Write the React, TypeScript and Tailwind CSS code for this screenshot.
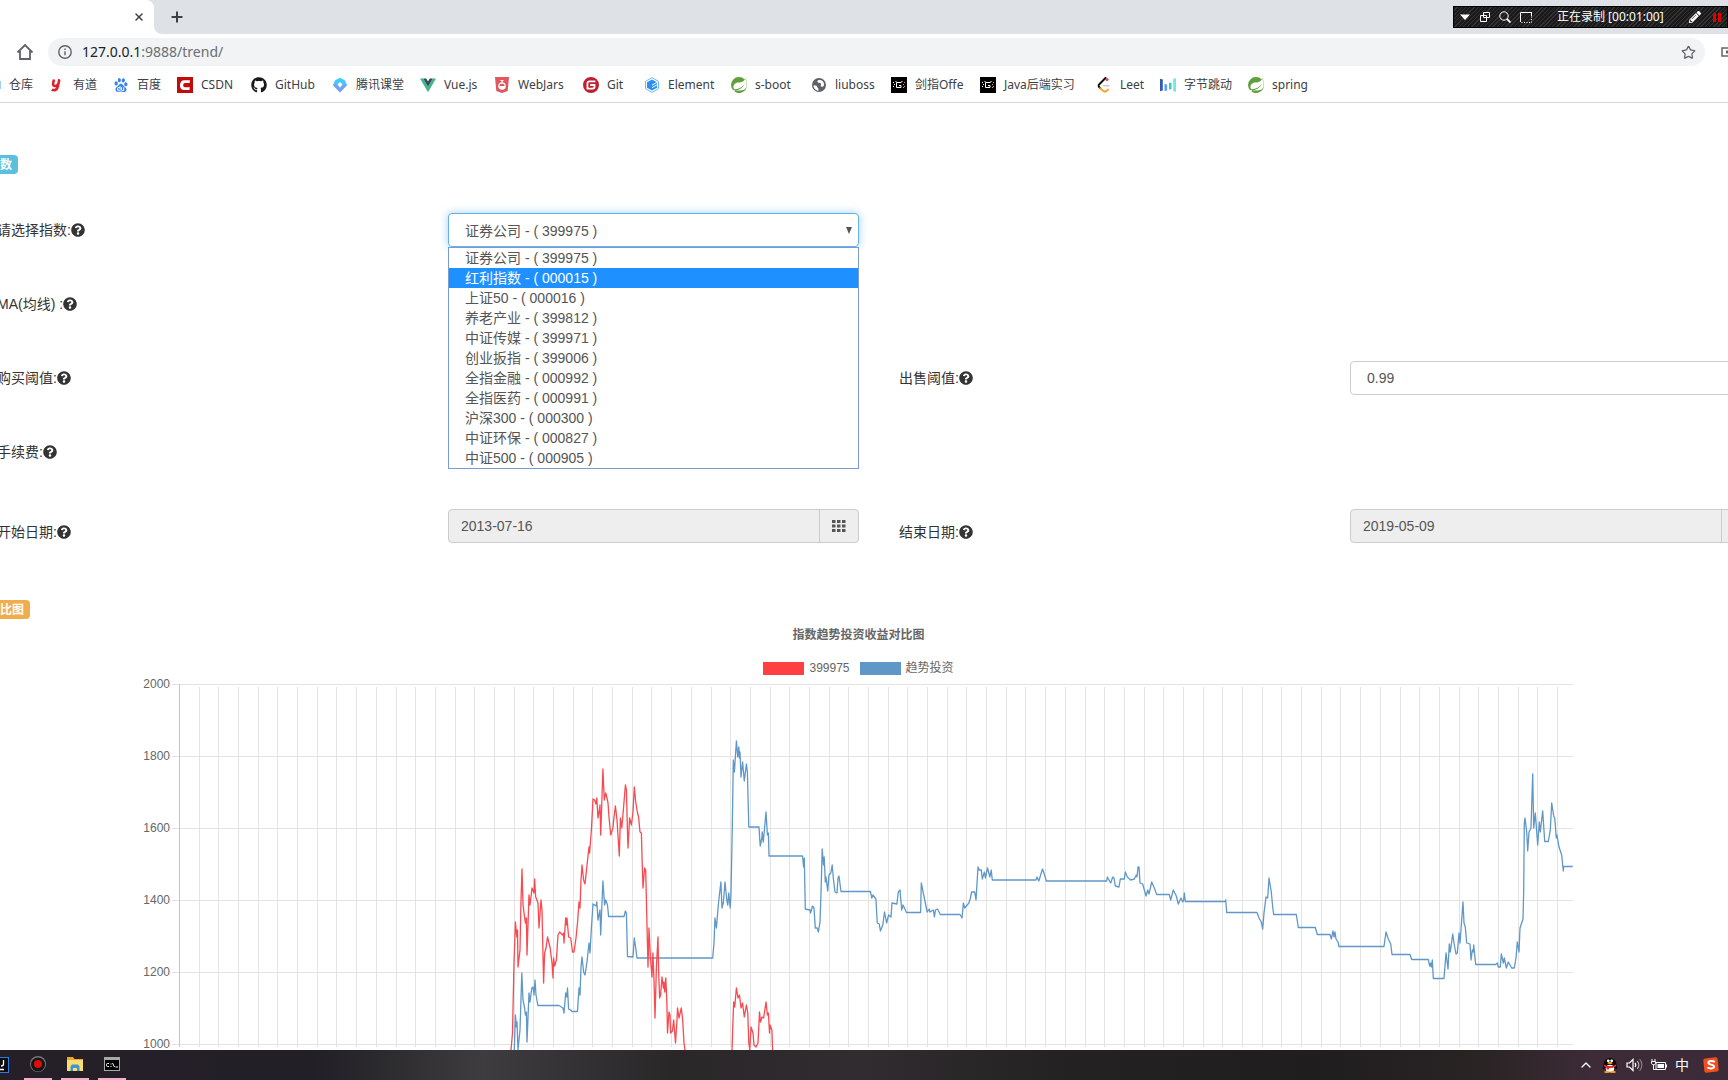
import type { ReactNode } from "react";
import { ChevronUp, Plus, Star, X } from "lucide-react";
import { FaGithub, FaPencilAlt, FaQuestionCircle } from "react-icons/fa";
import { SiBaidu, SiGitee, SiSpring } from "react-icons/si";

const indexes = [
  { name: "证券公司", code: "399975" },
  { name: "红利指数", code: "000015" },
  { name: "上证50", code: "000016" },
  { name: "养老产业", code: "399812" },
  { name: "中证传媒", code: "399971" },
  { name: "创业扳指", code: "399006" },
  { name: "全指金融", code: "000992" },
  { name: "全指医药", code: "000991" },
  { name: "沪深300", code: "000300" },
  { name: "中证环保", code: "000827" },
  { name: "中证500", code: "000905" },
];

const CsdnIcon = () => (
  <svg viewBox="0 0 16 16" className="h-4 w-4">
    <rect width="16" height="16" fill="#c20c0c" />
    <path d="M13 3.2H7.4C4.6 3.2 3.2 5.2 3 8c-.2 3 1 4.900 3.800 4.900h5.600l.4-2.700H7.900c-1.300 0-1.800-.8-1.700-2.200.1-1.300.7-2.100 2-2.100h4.400z" fill="#fff" />
  </svg>
);

const ClassroomIcon = () => (
  <svg viewBox="0 0 16 16" className="h-4 w-4">
    <path d="M8 1l5 2.500L15 8l-7 7.500L1 8l2-4.500z" fill="#4fc3fb" />
    <path d="M1 8l7 7.500L15 8l-3-1-4 4.500L4 7z" fill="#7d9df2" />
    <path d="M8 5l2.500 2.500L8 10.500 5.500 7.500z" fill="#fff" />
    <path d="M8 1l5 2.500L8 5 3 3.500z" fill="#35d0fb" />
  </svg>
);

const VueIcon = () => (
  <svg viewBox="0 0 16 16" className="h-4 w-4">
    <path d="M0 1.500h3.200L8 9.700l4.800-8.200H16L8 15.200z" fill="#41b883" />
    <path d="M3.200 1.500h3L8 4.600l1.800-3.100h3L8 9.700z" fill="#35495e" />
  </svg>
);

const WebJarsIcon = () => (
  <svg viewBox="0 0 16 16" className="h-4 w-4">
    <path d="M1 0h14l-1.300 14L8 16l-5.700-2z" fill="#e0585f" />
    <path d="M6.500 3.500h3M8 3.500v3" stroke="#fff" strokeWidth="1.200" />
    <circle cx="8" cy="9" r="3.200" fill="none" stroke="#fff" strokeWidth="1.200" />
    <path d="M4.800 9h6.400a3.200 3.200 0 0 1-6.400 0z" fill="#fff" />
  </svg>
);

const ElementIcon = () => (
  <svg viewBox="0 0 16 16" className="h-4 w-4">
    <path d="M8 .6l6.500 3.700v7.400L8 15.400l-6.500-3.700V4.300z" fill="none" stroke="#6cb8ff" strokeWidth="1" />
    <path d="M8 2.400l5 2.900v5.400l-5 2.900-5-2.900V5.300z" fill="#2a8ff7" />
    <path d="M8 8.200l5-2.900M8 10.700l5-2.900" stroke="#fff" strokeWidth="1" />
  </svg>
);

const GlobeIcon = () => (
  <svg viewBox="0 0 16 16" className="h-4 w-4">
    <circle cx="8" cy="8" r="7" fill="#5f6368" />
    <path d="M2.500 8.500c1.600-.6 3.500.2 3.700 1.600.2 1 1.300 1 1.300 2.200v1.400C5 13.500 2.600 11.500 2.500 8.500zM8 3c-1.600.2-2.200 1.600-1 2.500 1 .8 2.600.2 3 1.300.5 1.300-1 1.500 0 2.600.8.900 2.200.3 3-.9.4-2.700-1.300-5.500-4-5.500z" fill="#fff" />
  </svg>
);

const PixelIcon = () => (
  <svg viewBox="0 0 16 16" className="h-4 w-4">
    <rect width="16" height="16" fill="#000" />
    <path d="M5.500 5.500h5M5.500 5.500v5h4.500v-2H8M5 4v1M11 4v1" fill="none" stroke="#fff" />
    <path d="M2 5h1v1H2zM3 7h1v1H3zM2 9h1v1H2z" fill="#fff" />
    <path d="M13 5h1v1h-1zM12 7h1v1h-1zM13 9h1v1h-1zM12 10h1v1h-1z" fill="#f28b8b" />
  </svg>
);

const LeetIcon = () => (
  <svg viewBox="0 0 16 16" className="h-4 w-4" fill="none" strokeLinecap="round">
    <path d="M9.500 1L3.300 7.200a2 2 0 0 0 0 3l1 1" stroke="#111" strokeWidth="2" />
    <path d="M4.300 11.200l2.200 2.200c1.400 1.400 3.300 1.400 4.700 0l.8-.8" stroke="#f5a623" strokeWidth="2" />
    <path d="M7.500 8.700H13" stroke="#c9c9c9" strokeWidth="1.600" />
    <circle cx="11" cy="2.500" r="1.600" fill="#e0455e" />
  </svg>
);

const BytesIcon = () => (
  <svg viewBox="0 0 16 16" className="h-4 w-4">
    <path d="M0 1.800l2.800.7v11L0 14.200z" fill="#325ab4" />
    <path d="M4.500 7l2.600.6v5.800l-2.600.6z" fill="#5b9cf6" />
    <path d="M9 5.500l2.600.6v6l-2.600.6z" fill="#3fc9c9" />
    <path d="M13.200 1.800l2.800-.6v13.600l-2.800-.6z" fill="#78e6dc" />
  </svg>
);

const YoudaoIcon = () => (
  <svg viewBox="0 0 16 16" className="h-4 w-4" fill="none" stroke="#d9232e" strokeWidth="2.600">
    <path d="M5 2.500L4.200 6c-.5 2.300.6 3 2 3s2.700-.8 3.300-3l.8-3.500M10.300 2.500L8.800 9.500c-.6 2.600-1.800 3.700-3.600 3.700-1 0-1.700-.2-2.400-.6" />
  </svg>
);

const bookmarks: { label: string; width: string; icon: ReactNode }[] = [
  { label: "有道", width: "w-16", icon: <YoudaoIcon /> },
  { label: "百度", width: "w-16", icon: <SiBaidu className="h-[14px] w-[14px] text-[#3c82e8]" /> },
  { label: "CSDN", width: "w-[74px]", icon: <CsdnIcon /> },
  { label: "GitHub", width: "w-[81px]", icon: <FaGithub className="h-4 w-4 text-[#191717]" /> },
  { label: "腾讯课堂", width: "w-[88px]", icon: <ClassroomIcon /> },
  { label: "Vue.js", width: "w-[74px]", icon: <VueIcon /> },
  { label: "WebJars", width: "w-[89px]", icon: <WebJarsIcon /> },
  { label: "Git", width: "w-[61px]", icon: <SiGitee className="h-4 w-4 text-[#c01f2f]" /> },
  { label: "Element", width: "w-[87px]", icon: <ElementIcon /> },
  { label: "s-boot", width: "w-20", icon: <SiSpring className="h-4 w-4 text-[#5fa03c]" /> },
  { label: "liuboss", width: "w-20", icon: <GlobeIcon /> },
  { label: "剑指Offe", width: "w-[89px]", icon: <PixelIcon /> },
  { label: "Java后端实习", width: "w-[116px]", icon: <PixelIcon /> },
  { label: "Leet", width: "w-16", icon: <LeetIcon /> },
  { label: "字节跳动", width: "w-[88px]", icon: <BytesIcon /> },
  { label: "spring", width: "w-16", icon: <SiSpring className="h-4 w-4 text-[#5fa03c]" /> },
];

const RecorderBar = () => (
  <div className="mt-[6px] ml-auto flex h-[22px] w-[275px] items-center border border-black bg-[repeating-linear-gradient(135deg,#1a1a1a_0_2px,#333_2px_3px)] text-white">
    <button aria-label="菜单" className="ml-[5px] w-[20px]">
      <svg viewBox="0 0 12 12" className="h-3 w-3"><path d="M1 3.500h10L6 9z" fill="#fff" /></svg>
    </button>
    <button aria-label="窗口" className="w-[20px]">
      <svg viewBox="0 0 12 12" className="h-3 w-3" fill="none" stroke="#fff"><path d="M4.500 1.500h6v5h-6zM1.500 4.500h6v6h-6z" /></svg>
    </button>
    <button aria-label="放大" className="w-[21px]">
      <svg viewBox="0 0 12 12" className="h-3 w-3" fill="none" stroke="#fff"><circle cx="5" cy="5" r="4.200" /><path d="M8 8l3.500 3.500" strokeWidth="1.800" /></svg>
    </button>
    <button aria-label="区域" className="w-[37px]">
      <svg viewBox="0 0 12 12" className="h-3 w-3" fill="none" stroke="#fff"><path d="M.5 11V1.500H12" /><path d="M11.500 3v8.500H1" strokeDasharray="1 1.500" /><path d="M8 1.500h3.500V5" /></svg>
    </button>
    <span className="w-[132px] text-xs whitespace-nowrap">正在录制 [00:01:00]</span>
    <FaPencilAlt className="h-3 w-3" />
    <span className="ml-[12px] flex gap-[2px]">
      <i className="h-[9px] w-[3px] bg-[#e00000]" />
      <i className="h-[9px] w-[3px] bg-[#e00000]" />
    </span>
  </div>
);

const Browser = () => (
  <header className="shrink-0 border-b border-[#d5d6d8] bg-white font-['Noto_Sans','Noto_Sans_CJK_SC',sans-serif]">
    <div className="flex h-[34px] bg-[#dee1e6]">
      <div className="flex w-[154px] shrink-0 items-center justify-end rounded-tr-lg bg-white pr-[9px]">
        <button aria-label="关闭标签页"><X size={12} strokeWidth={3} className="text-[#3c4043]" /></button>
      </div>
      <svg viewBox="0 0 8 8" className="h-2 w-2 shrink-0 self-end"><path d="M0 0v8h8a8 8 0 0 1-8-8z" fill="#fff" /></svg>
      <button aria-label="新标签页" className="ml-[7px]"><Plus size={16} strokeWidth={3} className="text-[#3c4043]" /></button>
      <RecorderBar />
    </div>
    <div className="flex h-9 items-center">
      <button aria-label="主页" className="ml-4 w-[32px]">
        <svg viewBox="0 0 18 18" className="h-[18px] w-[18px]" fill="none" stroke="#5f6368" strokeWidth="1.800">
          <path d="M1.500 9.500L9 2l7.500 7.500M4 8v8h10V8" />
        </svg>
      </button>
      <div className="flex h-7 flex-1 items-center rounded-full bg-[#f1f3f4] pr-[9px] pl-[10px]">
        <svg viewBox="0 0 14 14" className="h-[14px] w-[14px]" fill="none" stroke="#5f6368" strokeWidth="1.400">
          <circle cx="7" cy="7" r="6.200" /><path d="M7 6.200v4M7 3.500v1.400" />
        </svg>
        <a href="#trend" className="ml-[10px] flex-1 text-sm leading-5 text-[#6b6f73]"><span className="text-[#202124]">127.0.0.1</span>:9888/trend/</a>
        <button aria-label="收藏"><Star size={15} className="text-[#5f6368]" /></button>
      </div>
      <svg viewBox="0 0 7 10" className="ml-[16px] h-[10px] w-[7px]"><path d="M7 1H1v8h6" fill="none" stroke="#5f6368" strokeWidth="1.500" /><path d="M5 3.500h2v3H5z" fill="#5f6368" /></svg>
    </div>
    <nav className="flex h-8 items-center pb-[3px] text-xs text-[#3c4043]">
      <a href="#repo" className="flex w-[49px] items-center whitespace-nowrap">
        <i className="mr-2 h-2 w-px bg-[#9fd0f5]" />仓库
      </a>
      {bookmarks.map((item, i) => (
        <a key={i} href="#bookmark" className={`flex shrink-0 items-center gap-2 whitespace-nowrap ${item.width}`}>
          <span className="flex h-4 w-4 shrink-0 items-center justify-center">{item.icon}</span>
          {item.label}
        </a>
      ))}
    </nav>
  </header>
);

const FieldLabel = ({ htmlFor, className = "", children }: { htmlFor: string; className?: string; children: ReactNode }) => (
  <label htmlFor={htmlFor} className={`flex items-center whitespace-nowrap text-[#333] ${className}`}>
    {children}
    <FaQuestionCircle size={14} />
  </label>
);

const DateField = ({ id, value }: { id: string; value: string }) => (
  <div className="flex rounded border border-[#ccc] bg-[#eee]">
    <input id={id} readOnly defaultValue={value} className="w-0 flex-1 px-3 text-[#555] outline-none" />
    <button type="button" aria-label="选择日期" className="flex w-[39px] items-center justify-center border-l border-[#ccc]">
      <svg viewBox="0 0 14 14" className="h-[14px] w-[14px]" fill="#555">
        <path d="M0 1h3.500v3H0zM5 1h3.500v3H5zM10 1h3.500v3H10zM0 5.500h3.500v3H0zM5 5.500h3.500v3H5zM10 5.500h3.500v3H10zM0 10h3.500v3H0zM5 10h3.500v3H5zM10 10h3.500v3H10z" />
      </svg>
    </button>
  </div>
);

const textBox = "w-full rounded border border-[#ccc] bg-white px-4 text-[#555] outline-none";

const TrendForm = () => (
  <form className="mt-[39px] -mr-[33px] -ml-[3px] grid auto-rows-[34px] grid-cols-4 gap-10 text-sm">
    <FieldLabel htmlFor="index">请选择指数:</FieldLabel>
    <div className="relative">
      <select
        id="index"
        className="h-full w-full appearance-none rounded border border-[#66afe9] bg-white pt-px pl-4 text-[#555] shadow-[0_0_8px_rgba(102,175,233,0.6)] outline-none"
      >
        {indexes.map((item) => (
          <option key={item.code}>{`${item.name} - ( ${item.code} )`}</option>
        ))}
      </select>
      <svg viewBox="0 0 6 7" className="pointer-events-none absolute top-[14px] right-[7px] h-[7px] w-[6px]"><path d="M0 0h6L3 7z" fill="#555" /></svg>
      <ul role="listbox" className="absolute top-full left-0 z-10 w-full border border-[#7a9cd3] bg-white leading-5 text-[#555]">
        {indexes.map((item, i) => (
          <li key={item.code} role="option" aria-selected={i === 1} className={i === 1 ? "bg-[#1e90ff] pl-4 text-white" : "pl-4"}>
            {item.name} - ( {item.code} )
          </li>
        ))}
      </ul>
    </div>

    <FieldLabel htmlFor="ma" className="col-start-1">MA(均线) :</FieldLabel>
    <input id="ma" className={textBox} />

    <FieldLabel htmlFor="buy" className="col-start-1">购买阈值:</FieldLabel>
    <input id="buy" className={textBox} />
    <FieldLabel htmlFor="sell">出售阈值:</FieldLabel>
    <input id="sell" defaultValue="0.99" className={textBox} />

    <FieldLabel htmlFor="fee" className="col-start-1">手续费:</FieldLabel>
    <input id="fee" className={textBox} />

    <FieldLabel htmlFor="start" className="col-start-1 pt-3">开始日期:</FieldLabel>
    <DateField id="start" value="2013-07-16" />
    <FieldLabel htmlFor="end" className="pt-3">结束日期:</FieldLabel>
    <DateField id="end" value="2019-05-09" />
  </form>
);

const indexLine =
  "511,380 512.5,363 514,293 515.4,252 516.8,267 517.5,260 518,297 520,280 521,230 522,199 523,235 524.6,247 525.4,253 526.4,248 527,285 529,225 530,235 532,218 534,223 534.6,209 535.7,227 538,233 539,258 541,230 542,240 543.6,313 544.6,283 546,278 547.5,267 550,277 552,293 553,308 553.6,288 554.6,296 556.4,290 558,265 559.6,262 562.5,265 563.5,263 564,273 565.7,248 566.4,255 567,248 568.6,267 570.7,268 572.5,282 574,282 576,268 577.5,253 579,232 580,238 581,210 582,195 583.6,210 585,214 586.8,197 589,177 589.6,183 591.4,160 593,129 594.6,130 596,134 596.8,128 598,148 599,142 600,135 600.7,165 601.8,133 602.9,99 604.3,130 605.7,123 607,128 608,133 609,147 610.7,165 612.9,158 614,147 615.4,136 617,150 619.3,186 620.4,148 621.8,158 623.6,137 625.4,115 626.4,120 627.5,163 628,178 629.6,148 631.4,155 633,142 634.3,117 635.7,132 637.5,143 638.6,147 640,162 641.4,163 642,187 643,218 644.6,198 645.7,200 646.8,247 648,297 649,258 650.4,288 652,307 652.9,283 654,310 655,348 656.4,297 658,267 658.6,300 659.6,328 660.6,325 662,307 663.4,318 664,312 664.8,322 665.8,308 666.9,333 667.5,363 669,342 670,345 670.6,363 672.4,361 673.7,350 675.5,373 677,350 677.5,338 679,348 681.3,338 682.7,350 684,373 685,380";

const indexRebound =
  "732,380 733,350 733.7,332 734.7,337 736.4,318 738,328 739.5,325 741,338 742.6,333 744.3,347 746.4,335 747.8,343 748.8,373 749.8,380 751,357 753,363 754,375 756,377 758,373 759.5,342 760.5,352 762,347 763.6,348 766,332 767.4,345 768.4,343 769.5,363 770,355 771.9,360 772.6,380";

const trendLine =
  "514.3,380 515.4,345 516.4,357 517,352 518,380 520,360 521.8,303 523,330 524.6,338 525.4,345 526.4,342 527,372 529,323 530,332 531.8,318 533,317 534,325 535,310 536,325 537.9,335.5 559,335.5 563,338 564,343 565.7,323 566.8,327 567.5,318 568.6,339 570.7,340 572,341.500 577.5,341.500 579,318 580,325 581,297 582,287 583.6,302 585,305 587,292 589,273 590,283 591.4,258 593,234 596,236 596.8,232 598,250 600,240 600.7,265 602.9,211 604.6,235 605.7,230 607.5,235 608.6,246.5 624,246.5 625.4,241 626.4,243 627.5,286.5 633,287 634.3,268 635.7,278 637,288 712.7,288 714,273 715,248 716.4,258 718.5,233 720.9,212 722,238 723.3,233 725,212 726.8,230 727.8,235 728.8,223 730.2,238 731,223 732.3,157 733.3,90 734.4,102 736.4,71 737.8,87 738.8,77 739.5,88 740,82 741,107 742.6,92 744.3,111 746.4,94 747.4,102 748.8,157 759,157 760.2,176 761.9,168 762.2,162 763.3,172 766,142 767.4,165 768.4,163 769,186 802.5,186 803.6,197 804.3,188 805.3,239 810,240 810.5,243 812.5,236 814,238 815.3,258 817.3,258 818.4,262 820,252 821,223 822.2,179 823.5,195 824.2,187 825.3,212 826,207 827.7,221 829,205 830.8,203 832.2,195 833.5,210 835,222 837,223 838,208 839,206 841,221.5 870.4,221.5 871.8,228 873,225 875.9,229 877.3,253 879.3,254 880.4,261 882.8,255 884.5,242 886.6,253 888.6,245 891,247 892,233 896.9,234 898.3,222 900,220 901.7,240 903,235 906.5,242.5 920.6,242.5 921.3,213 923.7,225 927.2,242 929.3,239 930,242 933.4,240 934.4,247 935.5,240 937.5,239 940.3,244.5 960,244.5 962,248 963.4,233 964.7,238 968.9,233 970.2,229 971.6,222 974.7,222 976,230 978,197 979.2,200 981.3,200 982.3,209 984.4,202 985.4,208 987.5,198 989.9,207 991.2,200 992.3,210 1036,210 1037,207 1038.8,211 1042.5,199 1044.6,205 1046.3,211 1106.7,211 1107.3,207 1110.7,213 1112.7,207 1114,208 1115.3,216 1119,217 1120.3,209 1124.3,209 1125.3,202 1127.3,207 1130.7,210 1134.3,209 1136.3,205 1137,207 1138,197 1139,197 1140,213 1142.7,214 1146,226 1147.7,220 1149,224 1151.7,212 1154.3,218 1156.7,224.5 1169.3,224.5 1170.7,230 1173.3,220 1176.3,226 1178.3,234 1181,228 1182.7,232 1183.6,230 1184.3,223 1185.3,231.5 1225.3,231.5 1225.7,230 1226.7,242.5 1257,242.5 1259,248 1261.3,252 1262.7,259 1264,243 1266,227 1267.7,228 1269,208 1271.3,222 1272.7,237 1273.7,244.5 1296.3,244.5 1298.3,257.5 1315.3,257.5 1317.3,264.5 1330,264.5 1331.3,269 1333,261 1334,267 1335,262 1336,269 1338,272 1339,276.5 1384,276.5 1386,262 1388.3,269 1390.7,274 1392,284.5 1410,284.5 1411.7,289.5 1428.3,289.5 1429.7,296 1430.7,293 1431.3,297 1432.3,290 1433.3,308.5 1444,308.5 1446,283 1448,299 1449.3,274 1450.3,282 1452.7,264 1454,273 1456,284 1457.3,283 1459,263 1460,273 1463,232 1464,253 1465.3,257 1466.7,273 1470,274 1471,290 1472.3,280 1473.3,282 1473.7,275 1475.7,294.5 1495.7,294.5 1497.3,293 1498.3,297 1500.3,297 1501.3,284 1503.3,293 1504.3,288 1506.3,298 1508.3,292 1511.7,298 1514.3,298 1516,288 1517.3,272 1519,282 1520,258 1523,249 1523.7,220 1524.3,153 1525,148 1526.7,162 1527.7,181 1529,162 1531,158 1532.7,104 1533.7,158 1535.3,143 1537.7,175 1539.3,152 1540.3,162 1542.7,141 1544.7,171.5 1548.3,171.5 1550.3,160 1551.7,133 1553.7,146 1554.7,148 1556.3,168 1557,165 1559,177 1561.7,185 1563.3,201 1563.7,196.5 1572.7,196.5";

const ticks = [2000, 1800, 1600, 1400, 1200, 1000];

const TrendChart = () => (
  <section>
    <div className="pr-[11px] text-xs text-[#666]">
      <h2 className="mt-[6px] text-center leading-5 font-bold">指数趋势投资收益对比图</h2>
      <div className="mt-4 flex h-[14px] items-center justify-center gap-[10px]">
        <span className="flex items-center gap-[5px]"><i className="h-[13px] w-[41px] bg-[#ff4040]" />399975</span>
        <span className="flex items-center gap-[5px]"><i className="h-[13px] w-[41px] bg-[#5f98c8]" />趋势投资</span>
      </div>
    </div>
    <svg viewBox="0 5 1728 375" className="block w-full">
      {ticks.map((tick, i) => (
        <g key={tick}>
          <path d={`M172 ${14.5 + i * 72}H1573`} stroke="#e3e3e3" />
          <text x="170" y={18 + i * 72} textAnchor="end" fontSize="12" fill="#666">{tick}</text>
        </g>
      ))}
      {Array.from({ length: 71 }, (_, i) => (
        <path key={i} d={`M${Math.round(179 + i * 19.686) + 0.5} ${i === 0 ? 14 : 17}V377`} stroke={i === 0 ? "#c4c4c4" : "#e3e3e3"} />
      ))}
      <g fill="none" strokeWidth="1.300" strokeLinejoin="round">
        <polyline points={trendLine} stroke="#5f98c8" />
        <polyline points={indexLine} stroke="#f84a50" />
        <polyline points={indexRebound} stroke="#f84a50" />
      </g>
    </svg>
  </section>
);

const Taskbar = () => (
  <footer className="flex h-[30px] shrink-0 items-center bg-[linear-gradient(90deg,#261f28_0%,#221f27_18%,#2b2a2d_22%,#3e3c3f_28%,#353235_33%,#2a2729_39%,#302c2f_50%,#232122_62%,#1f1d1e_76%,#2a2424_86%,#3d2b37_92%,#3b2a38_100%)] text-white">
    <svg viewBox="0 0 9 16" className="h-4 w-[9px]"><path d="M0 0h9v16H0z" fill="#2b7de0" /><path d="M0 1h8v14H0z" fill="#0b0b0f" /><path d="M3.500 3v4c0 1.500-1 2-2.500 2M0 12.500h4" fill="none" stroke="#fff" strokeWidth="1.300" /></svg>
    <div className="ml-[15px] flex gap-[9px] self-stretch">
      <button aria-label="录屏" className="flex w-7 items-center justify-center border-b-2 border-[#f5afc8]">
        <svg viewBox="0 0 16 16" className="h-4 w-4"><circle cx="8" cy="8" r="8" fill="#777" /><circle cx="8" cy="8.500" r="7" fill="#161616" /><circle cx="8" cy="8" r="4" fill="#e00b0b" /></svg>
      </button>
      <button aria-label="文件资源管理器" className="flex w-7 items-center justify-center border-b-2 border-[#f5afc8]">
        <svg viewBox="0 0 16 14" className="h-[14px] w-4"><path d="M0 0h6l1.500 2H16v12H0z" fill="#e8a92c" /><path d="M0 3h16v11H0z" fill="#fbdc72" /><path d="M3.500 14V9.500l1.500-2h6l1.500 2V14h-2.500v-3h-4v3z" fill="#3f95d0" /></svg>
      </button>
      <button aria-label="命令提示符" className="flex w-7 items-center justify-center border-b-2 border-[#f5afc8]">
        <svg viewBox="0 0 16 14" className="h-[14px] w-4"><path d="M0 0h16v14H0z" fill="#a8a8a8" /><path d="M1 3h14v10H1z" fill="#000" /><path d="M5 6.500H3.500a1 1 0 0 0-1 1v1a1 1 0 0 0 1 1H5M6.500 7h1M6.500 9.500h1M8.500 6l2 4M11.500 10h2.500" fill="none" stroke="#fff" /></svg>
      </button>
    </div>
    <div className="mr-[9px] ml-auto flex items-center gap-[8px]">
      <button aria-label="显示隐藏的图标"><ChevronUp size={16} /></button>
      <svg viewBox="0 0 16 16" className="h-4 w-4">
        <ellipse cx="8" cy="8" rx="6.500" ry="7" fill="#0a0a0a" />
        <path d="M2 8L.3 11.500l1.700.5M14 8l1.700 3.500L14 12" fill="#0a0a0a" />
        <ellipse cx="8" cy="11.500" rx="4.300" ry="3.800" fill="#fff" />
        <circle cx="6.300" cy="3.800" r="1.400" fill="#fff" /><circle cx="9.700" cy="3.800" r="1.400" fill="#fff" />
        <ellipse cx="8" cy="6" rx="2.600" ry="1" fill="#f5a81c" />
        <path d="M2 7.500c4 2 8 2 12 0v2c-4 2-8 2-12 0z" fill="#e5232e" /><path d="M4.500 9.500h2.500v3H4.500z" fill="#e5232e" />
        <ellipse cx="5" cy="15" rx="3" ry="1" fill="#f5a81c" /><ellipse cx="11" cy="15" rx="3" ry="1" fill="#f5a81c" />
      </svg>
      <svg viewBox="0 0 17 14" className="h-[14px] w-[17px]" fill="none" stroke="#fff" strokeWidth="1.200">
        <path d="M1 5h2.500L7 1.500v11L3.500 9H1z" /><path d="M9 5c1 1.200 1 2.800 0 4" /><path d="M11.300 3.200c2 2.200 2 5.400 0 7.600" opacity=".7" /><path d="M13.600 1.200c3 3.400 3 8.200 0 11.600" opacity=".4" />
      </svg>
      <svg viewBox="0 0 16 12" className="h-3 w-4">
        <path d="M5 3.500h9.500v7H5z" fill="none" stroke="#fff" /><path d="M6.500 5h6.500v4H6.500z" fill="#fff" /><path d="M15 5.500h1v3h-1z" fill="#fff" />
        <path d="M1 0v2M4 0v2M.5 2.500h4v2l-1 1.200h-2l-1-1.200zM2.500 6v4.500H5" fill="none" stroke="#fff" />
      </svg>
      <span className="text-sm leading-4">中</span>
      <svg viewBox="0 0 16 16" className="ml-[6px] h-4 w-4">
        <rect x=".8" y=".8" width="14.400" height="14.400" rx="2" fill="#f0501e" transform="rotate(-6 8 8)" />
        <path d="M11.800 4.800C9.500 3.500 5.400 3.600 5.400 5.700c0 2.200 5.700 1.600 5.700 3.900 0 2.200-4.400 2.300-6.700.9" fill="none" stroke="#fff" strokeWidth="2" />
      </svg>
    </div>
  </footer>
);

export default function App() {
  return (
    <div className="flex h-screen flex-col overflow-hidden bg-white font-['Liberation_Sans','Noto_Sans_CJK_SC',sans-serif]">
      <Browser />
      <main className="flex-1 overflow-hidden pt-[52px]">
        <h1 className="flex h-[19px] w-[18px] items-center rounded-r bg-[#5bc0de] text-xs font-bold text-white">数</h1>
        <TrendForm />
        <h1 className="mt-[57px] flex h-[19px] w-[30px] items-center rounded-r bg-[#f0ad4e] text-xs font-bold text-white">比图</h1>
        <TrendChart />
      </main>
      <Taskbar />
    </div>
  );
}
